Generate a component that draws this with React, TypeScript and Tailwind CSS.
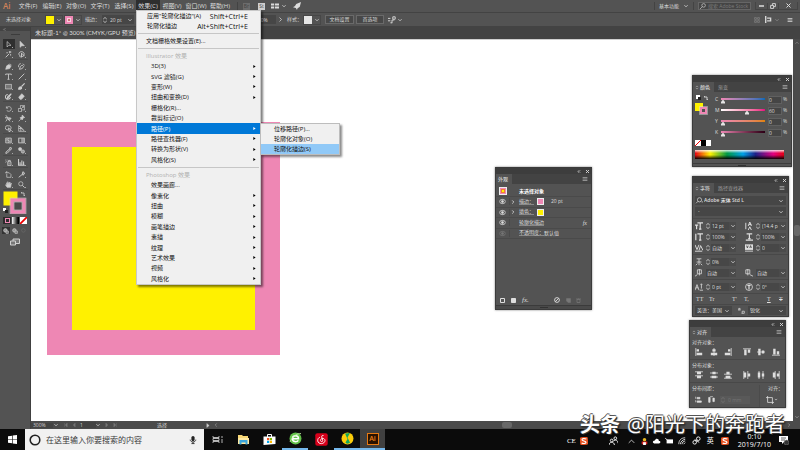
import { ReactNode } from 'react';

const CJK = "font-['Open_Sans','Noto_Sans_CJK_SC',sans-serif]";

interface GlyphProps {
  children: ReactNode;
  className?: string;
}

// 10x10 的小图标画布
const Glyph = ({ children, className = 'h-[9px] w-[9px]' }: GlyphProps) => (
  <svg
    viewBox="0 0 10 10"
    className={`shrink-0 ${className}`}
    fill="none"
    stroke="currentColor"
    strokeWidth="1"
    aria-hidden="true"
  >
    {children}
  </svg>
);

const Chevron = ({ className = 'h-[5px] w-[5px]' }: { className?: string }) => (
  <Glyph className={className}>
    <path d="M1 3l4 4 4-4" strokeWidth="2" />
  </Glyph>
);

const Stepper = () => (
  <Glyph className="h-[8px] w-[6px]">
    <path d="M2 3.5L5 .8l3 2.7M2 6.5l3 2.7 3-2.7" strokeWidth="1.3" />
  </Glyph>
);

const MenuLines = () => (
  <Glyph className="h-[6px] w-[6px]">
    <path d="M1 2.5h8M1 5h8M1 7.5h8" strokeWidth="1.3" />
  </Glyph>
);

const topMenus = ['文件(F)', '编辑(E)', '对象(O)', '文字(T)', '选择(S)', '效果(C)', '视图(V)', '窗口(W)', '帮助(H)'];

const illustratorEffects = [
  { label: '3D(3)', sub: true },
  { label: 'SVG 滤镜(G)', sub: true },
  { label: '变形(W)', sub: true },
  { label: '扭曲和变换(D)', sub: true },
  { label: '栅格化(R)...', sub: false },
  { label: '裁剪标记(O)', sub: false },
  { label: '路径(P)', sub: true, open: true },
  { label: '路径查找器(F)', sub: true },
  { label: '转换为形状(V)', sub: true },
  { label: '风格化(S)', sub: true },
];

const photoshopEffects = [
  { label: '效果画廊...', sub: false },
  { label: '像素化', sub: true },
  { label: '扭曲', sub: true },
  { label: '模糊', sub: true },
  { label: '画笔描边', sub: true },
  { label: '素描', sub: true },
  { label: '纹理', sub: true },
  { label: '艺术效果', sub: true },
  { label: '视频', sub: true },
  { label: '风格化', sub: true },
];

const pathItems = ['位移路径(P)...', '轮廓化对象(O)', '轮廓化描边(S)'];

interface Effect {
  label: string;
  sub: boolean;
  open?: boolean;
}

const EffectGroup = ({ items }: { items: Effect[] }) => (
  <ul className="grid h-[104px] auto-rows-fr">
    {items.map((item) => (
      <li key={item.label} className="relative min-h-0">
        <button
          className={`flex h-full w-full items-center justify-between pl-[14px] pr-[4px] ${
            item.open ? 'bg-[#0078d7] text-white' : ''
          }`}
        >
          {item.label}
          {item.sub && (
            <Glyph className={`h-[5px] w-[3px] ${item.open ? 'text-white' : 'text-black'}`}>
              <path d="M1 0l8 5-8 5z" fill="currentColor" stroke="none" />
            </Glyph>
          )}
        </button>
        {item.open && (
          <ul className="absolute left-full top-0 w-[80px] border border-[#bdbdbd] bg-[#f0f0f0] text-[#111] shadow-[2px_2px_2px_rgba(0,0,0,0.45)]">
            {pathItems.map((label, i) => (
              <li key={label}>
                <button
                  className={`flex h-[10px] w-full items-center pl-[13px] ${i === 2 ? 'bg-[#91c9f7]' : ''}`}
                >
                  {label}
                </button>
              </li>
            ))}
          </ul>
        )}
      </li>
    ))}
  </ul>
);

const Divider = () => (
  <div className="flex h-[5px] items-center px-[1px]">
    <div className="h-px w-full bg-[#c6c6c6]" />
  </div>
);

const EffectMenu = () => (
  <div className="absolute left-0 top-[10px] z-30 w-[125px] border border-[#c8c8c8] bg-[#f0f0f0] text-[6px] text-[#111] shadow-[2px_2px_2px_rgba(0,0,0,0.5)]">
    <button className="flex h-[10px] w-full items-center justify-between pl-[10px] pr-[12px]">
      <span>应用"轮廓化描边"(A)</span>
      <span className="text-[7px]">Shift+Ctrl+E</span>
    </button>
    <button className="flex h-[10px] w-full items-center justify-between pl-[10px] pr-[12px]">
      <span>轮廓化描边</span>
      <span className="text-[7px]">Alt+Shift+Ctrl+E</span>
    </button>
    <Divider />
    <button className="flex h-[10px] w-full items-center pl-[9px]">文档栅格效果设置(E)...</button>
    <Divider />
    <div className="flex h-[10px] items-center pl-[9px] text-[#b0b0b0]">Illustrator 效果</div>
    <EffectGroup items={illustratorEffects} />
    <Divider />
    <div className="flex h-[10px] items-center pl-[9px] text-[#b0b0b0]">Photoshop 效果</div>
    <EffectGroup items={photoshopEffects} />
  </div>
);

const MenuBar = () => (
  <header className="flex h-[13px] shrink-0 items-center border-b border-[#434343] text-[6px] text-[#dcdcdc]">
    <div className="w-[16px] pl-[3px] text-[8px] font-semibold text-[#d0825a]">Ai</div>
    <nav className="flex h-full">
      {topMenus.map((label, i) => (
        <div key={label} className="relative h-full w-[24px]">
          <button
            className={`flex h-full w-full items-center justify-center whitespace-nowrap ${i === 5 ? 'bg-[#2e2e2e]' : ''}`}
          >
            {label}
          </button>
          {i === 5 && <EffectMenu />}
        </div>
      ))}
    </nav>
    <div className="ml-[5px] flex items-center">
      <div className="h-[8px] w-px bg-[#434343]" />
      <span className="ml-[5px] flex h-[7px] w-[7px] items-center justify-center bg-[#6c6c6c] text-[5px] text-[#444]">Br</span>
      <span className="ml-[8px] flex h-[7px] w-[7px] items-center justify-center bg-[#cfcfcf] text-[5px] text-[#444]">St</span>
      <Glyph className="ml-[6px] h-[8px] w-[8px]">
        <path d="M0 2h4v2.5H0zM0 5.5h4V8H0zM5 2h5v2.5H5zM5 5.5h5V8H5z" fill="currentColor" stroke="none" />
      </Glyph>
      <Chevron className="ml-[3px] h-[4px] w-[4px]" />
      <Glyph className="ml-[7px] h-[8px] w-[8px]">
        <path d="M10 0L8.5 6 5.5 8 5 10 3.5 7.5 0 6.5 2.5 5 4 2.5z" fill="currentColor" stroke="none" />
      </Glyph>
    </div>
    <div className="ml-auto flex h-full items-center">
      <div className="h-[8px] w-px bg-[#434343]" />
      <button className="ml-[4px] flex items-center text-[5px]">
        基本功能
        <Chevron className="ml-[5px] h-[4px] w-[4px]" />
      </button>
      <div className="ml-[5px] h-[8px] w-px bg-[#434343]" />
      <label className="ml-[4px] flex h-[8px] items-center border border-[#666] bg-[#454545] pl-[1px]">
        <Glyph className="h-[6px] w-[6px]">
          <circle cx="6" cy="4" r="3" />
          <path d="M4 6L0 10" />
        </Glyph>
        <input
          aria-label="搜索"
          placeholder="搜索 Adobe Stock"
          className="ml-[2px] w-[42px] bg-transparent text-[5px] leading-none outline-none placeholder:text-[#7c7c7c]"
        />
      </label>
      <div className="ml-[4px] flex h-[8px] items-center border border-t-0 border-[#454545]">
        <button aria-label="最小化" className="flex w-[11px] justify-center">
          <Glyph className="h-[5px] w-[5px]"><path d="M0 6h10" strokeWidth="3" /></Glyph>
        </button>
        <button aria-label="还原" className="flex w-[12px] justify-center border-x border-[#454545]">
          <Glyph className="h-[6px] w-[6px]"><path d="M1 4h5v5H1zM4 4V1h5v5H6" strokeWidth="1.5" /></Glyph>
        </button>
        <button aria-label="关闭" className="flex w-[18px] justify-center">
          <Glyph className="h-[5px] w-[5px]"><path d="M1 1l8 8M9 1L1 9" strokeWidth="2" /></Glyph>
        </button>
      </div>
      <div className="w-[2px]" />
    </div>
  </header>
);

const ControlBar = () => (
  <div className="flex h-[14px] shrink-0 items-center border-b border-[#434343] text-[5px] text-[#d6d6d6]">
    <span className="w-[45px] pl-[6px]">未选择对象</span>
    <button aria-label="填色" className="flex items-center gap-[3px] border border-[#474747]">
      <span className="h-[8px] w-[8px] bg-[#fff100]" />
      <Chevron className="mr-[1px] h-[4px] w-[4px]" />
    </button>
    <button aria-label="描边颜色" className="ml-[1px] flex items-center gap-[3px] border border-[#474747]">
      <span className="flex h-[8px] w-[8px] items-center justify-center bg-[#ee87b4]">
        <span className="h-[4px] w-[4px] border border-[#f9d0e0] bg-[#c77]" />
      </span>
      <Chevron className="mr-[1px] h-[4px] w-[4px]" />
    </button>
    <label htmlFor="stroke" className="ml-[3px] w-[17px]">描边：</label>
    <div className="flex h-[9px] items-center bg-[#464646]">
      <Stepper />
      <input id="stroke" defaultValue="20 pt" className="w-[18px] bg-transparent pl-[2px] outline-none" />
      <Chevron className="h-[4px] w-[8px]" />
    </div>
    <input aria-label="不透明度" defaultValue="100%" className="ml-[119px] h-[9px] w-[23px] bg-[#464646] pl-[2px] outline-none" />
    <Glyph className="ml-[2px] h-[5px] w-[5px]"><path d="M3 1l4 4-4 4" strokeWidth="1.5" /></Glyph>
    <span className="ml-[4px] w-[16px]">样式：</span>
    <button aria-label="样式" className="flex items-center gap-[3px] border border-[#474747]">
      <span className="h-[8px] w-[8px] bg-[#e6e6e6]" />
      <Chevron className="mr-[1px] h-[4px] w-[4px]" />
    </button>
    <button className="ml-[4px] h-[9px] w-[29px] border border-[#6a6a6a] bg-[#484848] leading-none">文档设置</button>
    <button className="ml-[2px] h-[9px] w-[28px] border border-[#6a6a6a] bg-[#484848] leading-none">首选项</button>
    <Glyph className="ml-[4px] h-[8px] w-[8px]">
      <path d="M0 3h3M0 6h3M3 8.5h2M5 5h3M5 5v4M6 1h3v3H6z" strokeWidth="1.2" />
    </Glyph>
    <Chevron className="ml-[2px] h-[4px] w-[4px]" />
    <div className="ml-auto flex items-center pr-[7px]">
      <Glyph className="h-[6px] w-[6px] text-[#8b8b8b]">
        <path d="M1 1h3v3H1zM6 1h3v3H6zM1 6h3v3H1zM6 6h3v3H6z" />
      </Glyph>
      <Glyph className="ml-[5px] h-[7px] w-[7px]">
        <path d="M1 0v10M3 3h5v4H3" strokeWidth="2" />
      </Glyph>
      <Chevron className="ml-[3px] h-[4px] w-[4px] text-[#8b8b8b]" />
      <span className="w-[8px]" />
      <MenuLines />
    </div>
  </div>
);

const tools: { name: string; art: ReactNode }[][][] = [
  [
    [
      { name: '选择', art: <path d="M3 .8l5.500 5.400H5.300L3 8.600z" /> },
      { name: '直接选择', art: <path d="M3 .5l6 6.200H5.500L3 9z" fill="currentColor" /> },
    ],
    [
      { name: '魔棒', art: <path d="M1 9l5-5M7 0v3M5.500 1.500H9M2 2.500h2M8 4.500v2" strokeWidth="1.3" /> },
      { name: '套索', art: <path d="M3 7C-.5 4 2 1 5 1s5 3 3 5M3 7c-1 1 0 2 1 1M5 3v6l2-2h2z" strokeWidth="1.3" /> },
    ],
  ],
  [
    [
      { name: '钢笔', art: <path d="M1 9l1.500-5L6 2l2.500 2.500L6.500 8zM7 1l2.500 2.500" fill="currentColor" /> },
      { name: '曲率', art: <path d="M2 9l1.500-4L6 3l2 2-2 3zM1 6C0 3 2 1 4 1M7 1l2.500 2.500" strokeWidth="1.2" /> },
    ],
    [
      { name: '文字', art: <path d="M1 3V1.500h8V3M5 1.500V9M3.500 9h3" strokeWidth="1.2" /> },
      { name: '直线段', art: <path d="M1 9l8-8" strokeWidth="1.3" /> },
    ],
    [
      { name: '矩形', art: <path d="M.5 2h9v6.500h-9z" fill="#777" /> },
      { name: '画笔', art: <path d="M9.500.5L5 5M1 9c0-3 2-4 3.500-3S5 9 1 9z" fill="currentColor" strokeWidth="1.6" /> },
    ],
    [
      { name: '斑点画笔', art: <path d="M9 1L5.500 6 3.500 7 4 5zM4 2C1 2 0 5 1 7s5 3 7-1" strokeWidth="1.5" /> },
      { name: '橡皮擦', art: <path d="M1 6l4.500-5L9 4.500 5 9H3z" fill="currentColor" /> },
    ],
  ],
  [
    [
      { name: '旋转', art: <path d="M2 2v2.500h2.500M2 4.500C4 1 9 2 9 5.500S5 10 2.500 8" /> },
      { name: '比例缩放', art: <path d="M.5 5h4.500v4.500H.5zM3.500 4V.5h6V7H6M5 5l3-3M6 2h2v2" /> },
    ],
    [
      { name: '宽度', art: <path d="M1 1c5 2 2 6 8 4M1 9c2-1 1-3 3-4l3 4M0 4h5M7 3v4" strokeWidth="1.4" /> },
      { name: '操控变形', art: <path d="M6 0l3.500 3.500-2 .5L6 7 3 4l3-1.500zM4 6L1 9" fill="currentColor" /> },
    ],
    [
      { name: '形状生成器', art: <path d="M5 1.500a3 3 0 1 0 0 5M5 1c5 0 4 5 2 5.500M5 4l4 4-2 .5L6 10z" strokeWidth="1.2" /> },
      { name: '透视网格', art: <path d="M1 1v8h8.500zM1 5h4M4 3v6M1 1l7 6" /> },
    ],
  ],
  [
    [
      { name: '网格', art: <path d="M1 1.500h8v7H1zM1 5c3-3 5 3 8 0M5 1.500c-2 3 2 4 0 7" fill="#777" /> },
      { name: '渐变', art: <><rect x="1" y="1.5" width="8" height="7" fill="#999" /><path d="M2 2.500h2.500v5H2z" fill="#555" stroke="none" /></> },
    ],
    [
      { name: '吸管', art: <path d="M1 9l.5-2L6 3l1.500 1.500L3 9zM6 1.500L8.500 4l1-2.500L8.500.5z" fill="#777" strokeWidth="1.1" /> },
      { name: '混合', art: <><rect x="1" y="1" width="4" height="4" rx="1" fill="currentColor" /><circle cx="7" cy="6.5" r="2.3" fill="#999" /></> },
    ],
  ],
  [
    [
      { name: '符号喷枪', art: <path d="M4 4h4.500v5.500H4zM5 4V2h2.500v2M1 1v1M3 1v1M1 4v1M2.500 3v1M5 7h2" strokeWidth="1.2" /> },
      { name: '柱形图', art: <path d="M.8 0v9h9M3 8.500V4.500M5.500 8.500V2M8 8.500V3.500" strokeWidth="1.5" /> },
    ],
  ],
  [
    [
      { name: '画板', art: <path d="M2.500 0v3M0 2.500h6L8.500 5v4h-6V4" /> },
      { name: '切片', art: <path d="M1 9l5-4M6 5l1-4 2.500 2L7.500 6z" fill="#888" strokeWidth="1.3" /> },
    ],
    [
      { name: '抓手', art: <path d="M3 9L.8 5.500 2.500 6V2.500L4 5V1l1.500 4L7 1.500V5L9 3 8 9z" fill="currentColor" /> },
      { name: '缩放', art: <><circle cx="4" cy="4" r="3" /><path d="M6.200 6.200L9.500 9.500" strokeWidth="1.3" /></> },
    ],
  ],
];

const ToolPanel = () => (
  <aside className="flex w-[31px] shrink-0 flex-col items-center border-r border-[#404040] text-[#cfcfcf]">
    <div className="flex h-[4px] w-full items-center bg-[#434343] pl-[2px]">
      <Glyph className="h-[3px] w-[5px]"><path d="M5 1L1 5l4 4M9 1L5 5l4 4" /></Glyph>
    </div>
    <div className="mt-[3px] h-px w-[9px] bg-[#3c3c3c]" />
    <div className="mt-[4px] flex flex-col gap-[1px]">
      {tools.map((group, g) => (
        <div key={g} className="flex flex-col border-b border-[#4a4a4a]">
          {group.map((row, r) => (
            <div key={r} className="flex gap-[1px]">
              {row.map((tool, c) => (
                <button
                  key={tool.name}
                  aria-label={tool.name}
                  className={`flex h-[10px] w-[12px] items-center justify-center ${
                    g + r + c === 0 ? 'bg-[#2f2f2f]' : ''
                  }`}
                >
                  <Glyph className="h-[7px] w-[7px]">{tool.art}</Glyph>
                  <span className="mt-[6px] h-px w-px bg-[#aaa]" />
                </button>
              ))}
            </div>
          ))}
        </div>
      ))}
    </div>
    <svg viewBox="0 0 24 23" className="mt-[1px] h-[23px] w-[24px]" aria-hidden="true">
      <rect x="0.5" y="0.5" width="14" height="14" fill="#fff100" />
      <rect x="9" y="9" width="12" height="12" fill="#535353" stroke="#ee87b4" strokeWidth="3.5" />
      <rect x="7" y="7" width="16" height="16" fill="none" stroke="#d8d8d8" strokeWidth="0.5" />
      <rect x="11" y="11" width="8" height="8" fill="#4a4a4a" stroke="#eee" strokeWidth="0.5" />
      <path d="M18 2h3v3M18 2l1-1M21 5l1-1" stroke="#bbb" fill="none" />
      <path d="M0 17h3v3H0z" fill="#fff" />
      <path d="M2 19h3v3H2z" fill="#222" />
    </svg>
    <div className="mt-[3px] flex gap-[1px]">
      <button aria-label="颜色" className="flex h-[7px] w-[8px] items-center justify-center bg-[#2c2c2c]">
        <span className="h-[5px] w-[5px] border border-[#ee87b4]" />
      </button>
      <button aria-label="渐变填充" className="h-[7px] w-[7px] bg-linear-to-r from-white to-black" />
      <button aria-label="无" className="h-[7px] w-[7px] bg-white text-[#e00]">
        <Glyph className="h-[7px] w-[7px]"><path d="M0 10L10 0" strokeWidth="2.5" /></Glyph>
      </button>
    </div>
    <div className="mt-[3px] flex gap-[1px]">
      {['正常绘图', '背面绘图', '内部绘图'].map((name, i) => (
        <button
          key={name}
          aria-label={name}
          className={`flex h-[7px] w-[8px] items-center justify-center ${i === 0 ? 'bg-[#333]' : ''} ${
            i === 2 ? 'text-[#6c6c6c]' : ''
          }`}
        >
          <Glyph className="h-[6px] w-[6px]">
            <circle cx="4" cy="4" r="3" fill={i === 2 ? 'none' : '#999'} />
            {i !== 2 && <path d="M5 5h4v4H5z" fill="#777" />}
          </Glyph>
        </button>
      ))}
    </div>
    <button aria-label="更改屏幕模式" className="mt-[3px]">
      <Glyph className="h-[10px] w-[10px]">
        <path d="M.5 4h5v4h-5zM3 4V2h6.500v4.500h-4" fill="#777" />
      </Glyph>
    </button>
  </aside>
);

interface PanelProps {
  tabs: string[];
  arrows?: boolean;
  className: string;
  children: ReactNode;
}

const Panel = ({ tabs, arrows = true, className, children }: PanelProps) => (
  <section
    className={`absolute z-10 flex flex-col border border-[#3b3b3b] bg-[#535353] text-[5px] leading-none text-[#dedede] shadow-[0_0_2px_rgba(0,0,0,0.5)] ${className}`}
  >
    <div className="flex h-[6px] shrink-0 items-center justify-end gap-[5px] bg-[#3d3d3d] pr-[2px]">
      <Glyph className="h-[3px] w-[4px]"><path d="M5 1L1 5l4 4M9 1L5 5l4 4" strokeWidth="2" /></Glyph>
      <Glyph className="h-[3px] w-[3px]"><path d="M0 0l10 10M10 0L0 10" strokeWidth="3" /></Glyph>
    </div>
    <div className="flex h-[10px] shrink-0 items-center bg-[#434343] pr-[3px]">
      {tabs.map((tab, i) => (
        <button
          key={tab}
          className={`flex h-full items-center gap-[1px] pr-[4px] ${
            i === 0 ? 'bg-[#535353] pl-[2px] text-[#f0f0f0]' : 'pl-[4px] text-[#9d9d9d]'
          }`}
        >
          {i === 0 && arrows && (
            <Glyph className="h-[5px] w-[4px]"><path d="M2 4l3-3 3 3M2 6l3 3 3-3" /></Glyph>
          )}
          {tab}
        </button>
      ))}
      <span className="ml-auto text-[#a8a8a8]"><MenuLines /></span>
    </div>
    {children}
  </section>
);

const Eye = () => (
  <Glyph className="h-[7px] w-[7px]">
    <path d="M0 5c3-4 7-4 10 0-3 4-7 4-10 0z" strokeWidth="1.3" />
    <circle cx="5" cy="5" r="1.5" fill="currentColor" />
  </Glyph>
);

const appearanceRows = [
  { label: '描边：', swatch: 'bg-[#ee87b4]', value: '20 pt', fx: false, dim: false },
  { label: '填色：', swatch: 'bg-[#fff100]', value: '', fx: false, dim: false },
  { label: '轮廓化描边', swatch: '', value: '', fx: true, dim: false },
  { label: '不透明度：', swatch: '', value: '默认值', fx: false, dim: true },
];

const AppearancePanel = () => (
  <Panel tabs={['外观']} arrows={false} className="right-[208px] top-[167px] w-[97px]">
    <div className="flex h-[13px] items-center border-b border-[#4a4a4a] pt-[2px] pl-[3px]">
      <span className="flex h-[8px] w-[8px] items-center justify-center border border-[#eee] bg-[#ee87b4]">
        <span className="h-[4px] w-[4px] border border-[#f08030] bg-[#fff100]" />
      </span>
      <span className="ml-[12px] font-semibold text-white">未选择对象</span>
    </div>
    <div className="grid h-[42px] auto-rows-fr">
      {appearanceRows.map((row) => (
        <div key={row.label} className="flex items-center border-b border-[#4a4a4a]">
          <span className={`flex w-[14px] justify-center border-r border-[#4a4a4a] ${row.dim ? 'text-[#777]' : ''}`}>
            <Eye />
          </span>
          <span className="w-[9px] pl-[1px]">
            {row.swatch && (
              <Glyph className="h-[4px] w-[4px]"><path d="M3 1l4 4-4 4" strokeWidth="2" /></Glyph>
            )}
          </span>
          <button className="border-b border-[#888]">{row.label}</button>
          {row.swatch && <span className={`ml-[3px] h-[7px] w-[7px] border border-[#eee] ${row.swatch}`} />}
          <span className={row.swatch ? 'ml-[7px]' : ''}>{row.value}</span>
          {row.fx && <em className="ml-auto pr-[4px] font-['Liberation_Serif',serif] text-[6px]">fx</em>}
        </div>
      ))}
    </div>
    <div className="mt-[56px] flex h-[11px] items-center border-b border-[#3b3b3b] px-[4px]">
      <Glyph className="h-[5px] w-[5px]"><path d="M1 1h8v8H1z" strokeWidth="2" /></Glyph>
      <Glyph className="ml-[6px] h-[5px] w-[5px]"><path d="M1 1h8v8H1z" fill="currentColor" strokeWidth="2" /></Glyph>
      <em className="ml-[6px] font-['Liberation_Serif',serif] text-[7px]">fx.</em>
      <Glyph className="ml-auto h-[6px] w-[6px]"><circle cx="5" cy="5" r="4" strokeWidth="1.5" /><path d="M2 8l6-6" strokeWidth="1.5" /></Glyph>
      <Glyph className="ml-[6px] h-[5px] w-[5px] text-[#777]"><path d="M1 1h8v8H4L1 6z" fill="currentColor" /></Glyph>
      <Glyph className="ml-[5px] mr-[6px] h-[5px] w-[5px] text-[#777]"><path d="M2 3h6v6H2zM0 2h10M4 0h2" strokeWidth="1.5" /></Glyph>
    </div>
    <div className="flex h-[3px] items-center justify-center bg-[#4a4a4a]">
      <span className="h-px w-[8px] bg-[#333]" />
    </div>
  </Panel>
);

const channels = [
  { name: 'C', value: 0, track: 'from-[#ee87b4] to-[#0069b7]' },
  { name: 'M', value: 60, track: 'from-[#ffffff] to-[#e4007f]' },
  { name: 'Y', value: 0, track: 'from-[#ee87b4] to-[#e08200]' },
  { name: 'K', value: 0, track: 'from-[#ee87b4] to-[#2b0014]' },
];

const ColorPanel = () => (
  <Panel tabs={['颜色', '渐变']} className="right-[8px] top-[75px] w-[100px]">
    <div className="flex pt-[2px]">
      <div className="flex w-[20px] flex-col justify-between pl-[2px]">
        <svg viewBox="0 0 15 22" className="h-[22px] w-[15px]" aria-hidden="true">
          <path d="M1 1h4v4H1z" fill="#fff" />
          <path d="M3 3h3v3H3z" fill="#222" />
          <path d="M9 3h3v3M9 3l1-1M12 6l1-1" stroke="#ccc" fill="none" />
          <path d="M0 9h8v8H0z" fill="#fff100" />
          <path d="M6 14h5v5H6z" fill="#535353" stroke="#ee87b4" strokeWidth="2" />
          <path d="M4.500 12.500h8v8h-8z" fill="none" stroke="#ddd" strokeWidth="0.5" />
        </svg>
        <div className="flex h-[6px] w-[17px]">
          <svg viewBox="0 0 6 6" className="h-[6px] w-[6px] bg-white" aria-hidden="true"><path d="M0 6L6 0" stroke="#e00" /></svg>
          <span className="w-[5px] bg-black" />
          <span className="w-[5px] bg-white" />
        </div>
      </div>
      <div className="flex flex-1 flex-col pb-[8px]">
        {channels.map((channel) => (
          <div key={channel.name} className="flex h-[11px] items-center">
            <label htmlFor={`channel-${channel.name}`} className="w-[8px] pl-[2px]">{channel.name}</label>
            <input
              id={`channel-${channel.name}`}
              type="range"
              defaultValue={channel.value}
              className={`h-[8px] w-[44px] appearance-none bg-linear-to-r bg-[length:100%_2px] bg-[position:0_2px] bg-no-repeat ${channel.track} [&::-webkit-slider-thumb]:mt-[4px] [&::-webkit-slider-thumb]:h-[4px] [&::-webkit-slider-thumb]:w-[4px] [&::-webkit-slider-thumb]:appearance-none [&::-webkit-slider-thumb]:bg-[#e4e4e4] [&::-webkit-slider-thumb]:[clip-path:polygon(50%_0,100%_60%,100%_100%,0_100%,0_60%)]`}
            />
            <input
              aria-label={`${channel.name} 值`}
              defaultValue={channel.value}
              className="ml-[3px] h-[8px] w-[14px] border border-[#606060] bg-[#454545] outline-none"
            />
            <span className="ml-[1px]">%</span>
          </div>
        ))}
      </div>
    </div>
    <div className="mt-[4px] mr-[7px] ml-[2px] h-[9px] bg-[linear-gradient(to_bottom,rgba(255,255,255,0.85),rgba(255,255,255,0)_35%,rgba(0,0,0,0)_55%,rgba(0,0,0,0.95)),linear-gradient(to_right,#e60012,#fff100_17%,#009944_36%,#00a0e9_54%,#1d2088_68%,#e4007f_88%,#e60012)]" />
    <div className="mt-[4px] flex h-[3px] items-center justify-center border-t border-[#3b3b3b]">
      <span className="h-px w-[8px] bg-[#333]" />
    </div>
  </Panel>
);

const Field = ({ icon, label, value, stepper = true }: { icon: ReactNode; label: string; value: string; stepper?: boolean }) => (
  <div className="flex h-[11px] w-[41px] items-center">
    <Glyph className="h-[8px] w-[8px]">{icon}</Glyph>
    {stepper && <span className="ml-[2px] flex"><Stepper /></span>}
    <input
      aria-label={label}
      defaultValue={value}
      className={`h-[8px] bg-[#474747] pl-[1px] outline-none ${stepper ? 'w-[18px]' : 'ml-[3px] w-[23px]'}`}
    />
    <span className="flex h-[8px] w-[7px] items-center justify-center bg-[#4b4b4b]">
      <Chevron className="h-[4px] w-[4px]" />
    </span>
  </div>
);

const Select = ({ label, value, className }: { label: string; value: string; className: string }) => (
  <span className={`relative flex h-[9px] items-center bg-[#464646] ${className}`}>
    <select aria-label={label} className="h-full w-full appearance-none bg-transparent leading-none outline-none">
      <option>{value}</option>
    </select>
    <Chevron className="mr-[3px] h-[4px] w-[4px]" />
  </span>
);

const CharacterPanel = () => (
  <Panel tabs={['字符', '路径查找器']} className="right-[11px] top-[176px] w-[97px]">
    <div className="flex flex-col gap-[2px] px-[2px] pt-[3px] pb-[2px]">
      <div className="flex bg-[#464646]">
        <Glyph className="mt-[1px] h-[7px] w-[9px]">
          <circle cx="5" cy="4" r="3" />
          <path d="M3 6L0 9M8 7h2" />
        </Glyph>
        <Select label="字体" value="Adobe 宋体 Std L" className="flex-1 font-semibold" />
      </div>
      <Select label="字体样式" value="-" className="w-full pl-[3px]" />
    </div>
    <div className="flex flex-wrap justify-between border-t border-[#484848] px-[2px] py-[1px]">
      <Field label="字号" value="12 pt" icon={<path d="M3 1h7M6.500 1v8M0 4h4M2 4v5M5 9h3" strokeWidth="1.5" />} />
      <Field label="行距" value="(14.4 p" icon={<path d="M1 1v8M4 5l2-5 2 5M5 3h3M4 10l2-4 2 4" strokeWidth="1.2" />} />
      <Field label="垂直缩放" value="100%" icon={<path d="M1 1v8M3 1h7M6.500 1v8M5 9h3" strokeWidth="1.5" />} />
      <Field label="水平缩放" value="100%" icon={<path d="M2 1h7M5.500 1v6M1 9h9M4 7h3" strokeWidth="1.5" />} />
      <Field label="字距微调" value="自动" icon={<path d="M0 1l2.500 6L5 1M5 8l2-6 3 6M0 9h9" strokeWidth="1.2" />} />
      <Field label="字距" value="0" icon={<><path d="M0 1h10v6H0z" fill="currentColor" /><path d="M0 9h10" /><path d="M2 2l1 3 1-3M6 5l1-3 1 3" stroke="#444" /></>} />
    </div>
    <div className="flex flex-wrap justify-between border-t border-[#484848] px-[2px] py-[1px]">
      <Field label="比例间距" value="0%" icon={<path d="M2 1h6M5 1v4M2 5h6M1 9l2-2M9 9L7 7M5 5v4" />} />
      <span className="w-[41px]" />
      <Field label="左间距" value="自动" stepper={false} icon={<path d="M3 1h5v5H3zM5.500 0v8M0 9l3-2" />} />
      <Field label="右间距" value="自动" stepper={false} icon={<path d="M1 1h5v5H1zM3.500 0v8M10 9L6 7" />} />
    </div>
    <div className="flex justify-between border-t border-[#484848] px-[2px] py-[1px]">
      <Field label="基线偏移" value="0 pt" icon={<path d="M0 9l2.500-7L5 9M1 6h3M8 1v6M7 2l1-1 1 1M6 9h4" />} />
      <Field label="旋转" value="0°" icon={<><circle cx="5" cy="5" r="4.3" /><path d="M3 3h4M5 3v5" strokeWidth="1.5" /></>} />
    </div>
    <div className="flex h-[11px] items-center border-t border-[#484848] px-[3px] font-['Liberation_Serif',serif] text-[6px]">
      <button className="w-[13px] text-left">TT</button>
      <button className="w-[23px] text-left">Tr</button>
      <button className="w-[12px] text-left">T'</button>
      <button className="w-[23px] text-left">T,</button>
      <button className="w-[12px] text-left underline">T</button>
      <button className="text-left line-through">T</button>
    </div>
    <div className="flex h-[12px] items-center border-t border-[#484848] px-[2px]">
      <Select label="语言" value="英语：美国" className="w-[37px] pl-[2px]" />
      <Glyph className="ml-[6px] h-[7px] w-[7px]"><path d="M1 5V2h2v3M1 4h2M5 9h4V6H6v3" /></Glyph>
      <Select label="消除锯齿" value="锐化" className="ml-[3px] flex-1 pl-[2px]" />
    </div>
  </Panel>
);

const alignIcons = [
  ['水平左对齐', 'M1 0v10', 'M2 1.500h3v3H2zM2 6h7v3H2z'],
  ['水平居中对齐', 'M5 0v10', 'M3 1.500h4v3H3zM1 6h8v3H1z'],
  ['水平右对齐', 'M9 0v10', 'M5 1.500h3v3H5zM1 6h7v3H1z'],
  ['垂直顶对齐', 'M0 1h10', 'M1.500 2h3v7h-3zM6 2h3v4H6z'],
  ['垂直居中对齐', 'M0 5h10', 'M1.500 1h3v8h-3zM6 3h3v4H6z'],
  ['垂直底对齐', 'M0 9h10', 'M1.500 1h3v7h-3zM6 4h3v4H6z'],
];

const distributeIcons = [
  ['垂直顶分布', 'M0 1h10M0 6h10', 'M2.500 1h5v3h-5zM2.500 6h5v3h-5z'],
  ['垂直居中分布', 'M0 2.500h10M0 7.500h10', 'M3 1h4v3H3zM2 6h6v3H2z'],
  ['垂直底分布', 'M0 4h10M0 9h10', 'M3 1h4v3H3zM2 6h6v3H2z'],
  ['水平左分布', 'M1 0v10M6 0v10', 'M1 2h3v6H1zM6 3h3v4H6z'],
  ['水平居中分布', 'M2.500 0v10M7.500 0v10', 'M1 2h3v6H1zM6 3h3v4H6z'],
  ['水平右分布', 'M4 0v10M9 0v10', 'M1 2h3v6H1zM6 3h3v4H6z'],
];

const IconRow = ({ icons }: { icons: string[][] }) => (
  <div className="flex h-[12px] items-center">
    {icons.map(([name, line, block], i) => (
      <button key={name} aria-label={name} className={`flex w-[15px] justify-center ${i === 3 ? 'ml-[4px]' : ''}`}>
        <Glyph className="h-[8px] w-[8px]">
          <path d={line} />
          <path d={block} fill="currentColor" stroke="none" />
        </Glyph>
      </button>
    ))}
  </div>
);

const AlignPanel = () => (
  <Panel tabs={['对齐']} className="right-[14px] top-[320px] w-[97px]">
    <div className="px-[2px] pt-[2px] pb-[1px]">
      <p className="leading-[7px]">对齐对象：</p>
      <IconRow icons={alignIcons} />
    </div>
    <div className="border-t border-[#484848] px-[2px] pt-[2px] pb-[1px]">
      <p className="leading-[7px]">分布对象：</p>
      <IconRow icons={distributeIcons} />
    </div>
    <div className="flex border-t border-[#484848] px-[2px] pt-[2px]">
      <div className="flex-1">
        <label htmlFor="spacing" className="block leading-[7px]">分布间距：</label>
        <div className="flex h-[15px] items-center pl-[3px]">
          <Glyph className="h-[7px] w-[7px]"><path d="M1 9V6M1 4V1M3 2h4v2H3zM3 7h6v2H3z" fill="currentColor" /></Glyph>
          <Glyph className="ml-[6px] h-[7px] w-[7px]"><path d="M1 2h2v7H1zM7 3h2v5H7zM3 1h4" fill="currentColor" /></Glyph>
          <span className="ml-[5px] flex items-center bg-[#595959] text-[#757575]">
            <Stepper />
            <input id="spacing" disabled defaultValue="0 mm" className="h-[8px] w-[24px] pl-[2px]" />
          </span>
        </div>
      </div>
      <div className="w-[24px] border-l border-[#4b4b4b]">
        <p className="text-right leading-[7px]">对齐：</p>
        <button aria-label="对齐到" className="flex h-[15px] w-full items-center justify-center">
          <Glyph className="h-[8px] w-[8px]"><path d="M2 0v8h8M0 2h8v8" /></Glyph>
          <Chevron className="h-[3px] w-[4px]" />
        </button>
      </div>
    </div>
  </Panel>
);

const StatusBar = () => (
  <div className="flex h-[8px] shrink-0 items-center bg-[#4b4b4b] text-[5px] text-[#d0d0d0]">
    <select aria-label="缩放比例" className="w-[22px] appearance-none bg-[#434343] pl-[2px] leading-none">
      <option>300%</option>
    </select>
    <Chevron className="ml-[1px] h-[4px] w-[4px]" />
    <Glyph className="ml-[6px] h-[4px] w-[4px] text-[#777]"><path d="M1 0v10M8 0L3 5l5 5z" fill="currentColor" /></Glyph>
    <Glyph className="ml-[4px] h-[4px] w-[4px] text-[#777]"><path d="M8 0L3 5l5 5z" fill="currentColor" /></Glyph>
    <input aria-label="画板" defaultValue="1" className="ml-[4px] h-[6px] w-[16px] bg-[#434343]" />
    <Chevron className="h-[4px] w-[4px]" />
    <Glyph className="ml-[5px] h-[4px] w-[4px] text-[#777]"><path d="M2 0l5 5-5 5z" fill="currentColor" /></Glyph>
    <Glyph className="ml-[4px] h-[4px] w-[4px] text-[#777]"><path d="M9 0v10M2 0l5 5-5 5z" fill="currentColor" /></Glyph>
    <span className="ml-[40px]">选择</span>
    <Glyph className="ml-[39px] h-[5px] w-[4px]"><path d="M2 0l6 5-6 5z" fill="currentColor" /></Glyph>
    <Glyph className="ml-[4px] h-[4px] w-[4px]"><path d="M7 1L3 5l4 4" /></Glyph>
    <span className="ml-[284px] h-[6px] w-[10px] rounded-[2px] bg-[#686868]" />
    <Glyph className="ml-auto mr-[9px] h-[4px] w-[4px]"><path d="M3 1l4 4-4 4" /></Glyph>
  </div>
);

const Workspace = () => (
  <main className="flex min-w-0 flex-1 flex-col">
    <div className="flex h-[12px] shrink-0 bg-[#434343] text-[6px] text-[#dedede]">
      <div className="flex items-center whitespace-nowrap border-r border-[#3a3a3a] bg-[#4b4b4b] pl-[4px] pr-[6px] font-['Lato','Noto_Sans_CJK_SC',sans-serif]">
        未标题-1* @ 300% (CMYK/GPU 预览)
        <button aria-label="关闭文档" className="ml-[6px]">
          <Glyph className="h-[4px] w-[4px]"><path d="M1 1l8 8M9 1L1 9" strokeWidth="2" /></Glyph>
        </button>
      </div>
    </div>
    <div className="flex min-h-0 flex-1">
      <div className="relative flex-1 overflow-hidden border-t border-[#d0d0d0] bg-white">
        <div className="absolute left-[16px] top-[82px] h-[233px] w-[233px] border-[25px] border-[#ee87b4] bg-[#fff100]" />
      </div>
      <div className="flex w-[7px] flex-col items-center justify-between bg-[#4b4b4b] py-[2px] text-[#999]">
        <Glyph className="h-[4px] w-[4px]"><path d="M1 7l4-4 4 4" strokeWidth="1.5" /></Glyph>
        <span className="h-[11px] w-[6px] rounded-[2px] bg-[#686868]" />
        <Chevron className="h-[4px] w-[4px]" />
      </div>
    </div>
    <StatusBar />
  </main>
);

const AppSlot = ({ name, state = '', children }: { name: string; state?: string; children: ReactNode }) => (
  <button aria-label={name} className={`flex h-full w-[26px] items-center justify-center ${state}`}>
    <svg viewBox="0 0 13 13" className="h-[13px] w-[13px]" aria-hidden="true">{children}</svg>
  </button>
);

const SogouBadge = ({ className }: { className: string }) => (
  <svg viewBox="0 0 10 10" className={`h-[8px] w-[8px] ${className}`} aria-hidden="true">
    <rect width="10" height="10" rx="2" fill="#e8501e" transform="rotate(-4 5 5)" />
    <path d="M8 2.500C5 1.500 2.500 2 2.500 3.500S7.500 5 7.500 6.700 4 8.500 2 7.500" stroke="#fff" strokeWidth="1.4" fill="none" />
  </svg>
);

const TaskBar = () => (
  <footer className="relative flex h-[21px] shrink-0 items-center bg-[#0b0b0b] text-white">
    <button aria-label="开始" className="flex w-[25px] justify-center">
      <svg viewBox="0 0 10 10" className="h-[9px] w-[9px]" aria-hidden="true">
        <path d="M0 1.400l4.500-.7v4H0zM5.200.6L10 0v4.700H5.200zM0 5.300h4.500v4L0 8.600zM5.200 5.300H10V10l-4.800-.6z" fill="#fff" />
      </svg>
    </button>
    <label className="flex h-full w-[179px] items-center bg-[#f1f1f1] pl-[4px] pr-[7px] text-[#222]">
      <Glyph className="h-[12px] w-[12px]"><circle cx="5" cy="5" r="4" strokeWidth="1.3" /></Glyph>
      <input
        aria-label="搜索内容"
        placeholder="在这里输入你要搜索的内容"
        className="ml-[5px] min-w-0 flex-1 bg-transparent text-[8px] outline-none placeholder:text-[#3a3a3a]"
      />
      <Glyph className="h-[10px] w-[8px]">
        <rect x="3" y="0" width="4" height="6.5" rx="2" fill="currentColor" stroke="none" />
        <path d="M1.500 4.500c0 4 7 4 7 0M5 7.500V10M3 9.500h4" />
      </Glyph>
    </label>
    <AppSlot name="任务视图">
      <path d="M2 3v1.500h6V3M2 10V8.500h6V10M2 5.500h6v2H2zM11 3v2M11 6v4" stroke="#ddd" fill="none" strokeWidth="0.8" />
    </AppSlot>
    <AppSlot name="文件资源管理器">
      <path d="M1 2h4l1 1h5v8H1z" fill="#f8d775" />
      <path d="M1 5h11v6H1z" fill="#ffe9a2" />
      <path d="M2.500 7h8v4.500H8.500V9.500h-4v2h-2z" fill="#3ba5dc" />
    </AppSlot>
    <AppSlot name="应用商店">
      <path d="M4.500 4V1.500h4V4" stroke="#fff" fill="none" />
      <path d="M.5 3.500h12v7.500l-12 1z" fill="#fff" />
      <path d="M4 5h2.200v2.200H4z" fill="#f25022" />
      <path d="M6.800 5H9v2.200H6.800z" fill="#7fba00" />
      <path d="M4 7.800h2.200V10H4z" fill="#00a4ef" />
      <path d="M6.800 7.800H9V10H6.800z" fill="#ffb900" />
    </AppSlot>
    <AppSlot name="浏览器" state="border-b-2 border-[#76b9ed]">
      <circle cx="6.5" cy="6.5" r="6" fill="#63c14a" />
      <path d="M3.500 6.800h6c0-4-6-4-6 0 0 3.500 4.500 3.500 5.800 1.500" stroke="#fff" strokeWidth="1.5" fill="none" />
      <path d="M1 10C3 5 8 1 12 1.500" stroke="#c9f0b0" fill="none" strokeWidth="0.8" />
    </AppSlot>
    <AppSlot name="音乐">
      <rect x="0.3" y="0.3" width="12.4" height="12.4" rx="2" fill="#d8001b" />
      <path d="M8.500 2.500C6.500 2 6.500 3.500 7 5l.7 2.500c.3 1.500-2.200 1.500-2.200 0C5.500 5 9.500 4.500 10 7.300c0 4.200-7 4.500-7.300.4C2.700 5.800 3.500 4.800 4.800 4.300" stroke="#fff" strokeWidth="0.9" fill="none" />
    </AppSlot>
    <AppSlot name="QQ音乐" state="border-b-2 border-[#76b9ed]">
      <circle cx="6.5" cy="6.5" r="6" fill="#fccd0a" />
      <path d="M4 1.500L9 1 6.500 5.500 9 10.500C8 12 5 12 4.500 10.500L6.500 7z" fill="#14a85c" />
    </AppSlot>
    <button aria-label="Illustrator" className="flex h-full w-[25px] items-center justify-center border-b-2 border-[#76b9ed] bg-[#404040]">
      <span className="flex h-[12px] w-[12px] items-center justify-center border border-[#e87a12] bg-[#2a1200] text-[7px] font-semibold leading-none text-[#f08019]">
        Ai
      </span>
    </button>
    <div className="ml-auto flex h-full items-end pb-[5px] pr-[11px] text-[7px]">
      <span className="font-['Liberation_Serif',serif]">CE</span>
      <SogouBadge className="ml-[4px]" />
      <Glyph className="ml-[21px] h-[9px] w-[9px]"><circle cx="3" cy="5" r="1.5" /><circle cx="7" cy="2.5" r="1.5" /><path d="M0 10c0-4 6-4 6 0M5 6c2-3 5-1 5 2" /></Glyph>
      <Glyph className="ml-[10px] h-[7px] w-[7px]"><path d="M1 7l4-4 4 4" /></Glyph>
      <Glyph className="ml-[6px] h-[7px] w-[7px]">
        <circle cx="5" cy="2.5" r="2.5" fill="#e8b820" stroke="none" />
        <path d="M1 5h8v4H1z" fill="#d22" stroke="none" />
        <path d="M3 6h4v4H3z" fill="#fff" stroke="none" />
      </Glyph>
      <Glyph className="ml-[4px] h-[8px] w-[9px]"><path d="M2 8C-1 7 1 4 3 4.500 4 1 8 2 8 5c3 0 2 3 0 3z" fill="currentColor" stroke="none" /></Glyph>
      <Glyph className="ml-[4px] h-[8px] w-[8px]"><path d="M2 3h8v5H2z" fill="currentColor" stroke="none" /><path d="M0 1l3 3" /></Glyph>
      <Glyph className="ml-[5px] h-[8px] w-[8px]"><path d="M1 9C1 4 4 1 9 1M3 9c0-3 3-6 6-6M5 9c0-2 2-4 4-4M7 9l2-2" /></Glyph>
      <Glyph className="ml-[6px] h-[9px] w-[9px]"><circle cx="3" cy="7" r="2" /><circle cx="7" cy="3" r="2" /><path d="M3 4l5 3" /></Glyph>
      <span className="ml-[6px] leading-[9px]">英</span>
      <SogouBadge className="ml-[7px]" />
      <div className="-mb-[4px] ml-[9px] text-center leading-[8px]">
        <p>0:10</p>
        <p>2019/7/10</p>
      </div>
      <div className="ml-[8px] flex h-[10px] w-[10px] items-center justify-center">
        <Glyph className="h-[10px] w-[10px]">
          <path d="M0 1h9v6H5L3 9V7H0z" fill="currentColor" stroke="none" />
          <path d="M2 3h5M2 5h4" stroke="#222" strokeWidth="0.7" />
          <circle cx="7.5" cy="7.5" r="2.5" fill="#333" stroke="#888" strokeWidth="0.5" />
        </Glyph>
      </div>
    </div>
    <p className="pointer-events-none absolute bottom-[14px] right-[15px] z-20 flex items-center gap-[7px] whitespace-nowrap text-[20px] leading-[22px] text-white [text-shadow:1px_1px_0_#333,-1px_0_0_#555,0_-1px_0_#555,1px_1px_2px_#000]">
      <strong>头条</strong>
      <span>@阳光下的奔跑者</span>
    </p>
  </footer>
);

export default function App() {
  return (
    <div className={`relative flex h-screen w-full flex-col overflow-hidden bg-[#535353] leading-none ${CJK}`}>
      <MenuBar />
      <ControlBar />
      <div className="flex min-h-0 flex-1">
        <ToolPanel />
        <Workspace />
      </div>
      <TaskBar />
      <AppearancePanel />
      <ColorPanel />
      <CharacterPanel />
      <AlignPanel />
    </div>
  );
}
